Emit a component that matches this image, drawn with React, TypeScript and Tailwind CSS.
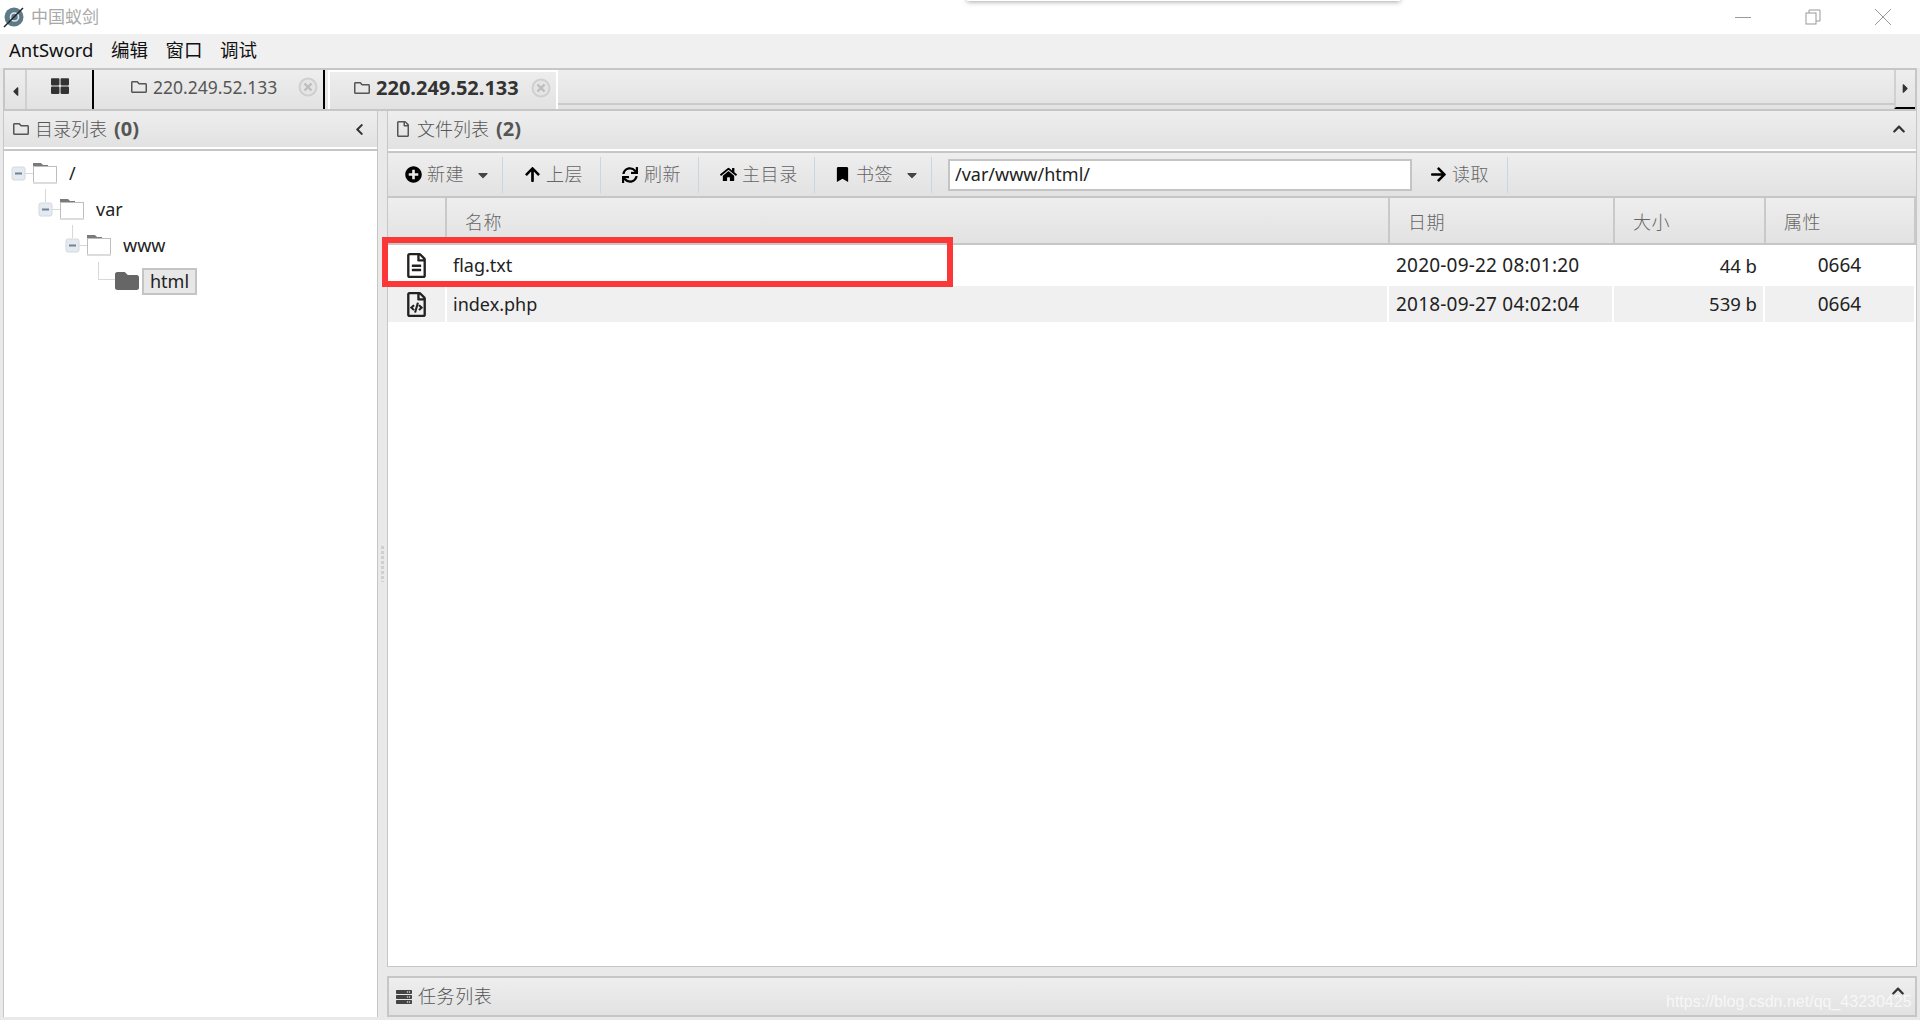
import type { ReactNode } from "react"
import {
  FaArrowRight,
  FaArrowUp,
  FaBookmark,
  FaCaretDown,
  FaCaretLeft,
  FaCaretRight,
  FaChevronLeft,
  FaChevronUp,
  FaFolder,
  FaHome,
  FaPlusCircle,
  FaRegFile,
  FaRegFileAlt,
  FaRegFileCode,
  FaRegFolder,
  FaServer,
  FaSync,
  FaThLarge,
} from "react-icons/fa"

const FONT = "font-['Noto_Sans','Noto_Sans_CJK_SC',sans-serif]"
const BAR = "bg-linear-to-b from-[#eeeeee] to-[#e2e2e2]"

function Logo() {
  return (
    <svg width="22" height="22" viewBox="0 0 22 22" className="ml-[3px]">
      <circle cx="11" cy="11" r="9.5" fill="#5d7a88" />
      <circle cx="11.5" cy="11" r="4" fill="none" stroke="#dfe6ea" strokeWidth="1.6" />
      <path d="M1 21 L20 2" stroke="#222" strokeWidth="1.4" />
    </svg>
  )
}

function CloseDot() {
  return (
    <svg width="20" height="20" viewBox="0 0 20 20" className="shrink-0">
      <circle cx="10" cy="10" r="8.5" fill="#e4e4e4" stroke="#cfcfcf" strokeWidth="2" />
      <path d="M6.5 6.5 L13.5 13.5 M13.5 6.5 L6.5 13.5" stroke="#bdbdbd" strokeWidth="2.4" />
    </svg>
  )
}

function Toggle() {
  return (
    <svg width="26" height="36" viewBox="0 0 26 36" className="shrink-0">
      <rect x="5" y="12" width="13" height="13" rx="2" fill="#e4eaef" stroke="#d3d9de" />
      <path d="M8 18.5 H15" stroke="#6f8596" strokeWidth="2" />
      <path d="M18 18.5 H26" stroke="#d8d8d8" />
    </svg>
  )
}

// tree folder: dark tab on top, pale outlined body
function TreeFolder() {
  return (
    <svg width="24" height="22" viewBox="0 0 24 22" className="shrink-0">
      <path d="M0 5 V1 H8 L10 3 H15 V5 Z" fill="#7a7a7a" />
      <rect x="0.5" y="4.5" width="23" height="16" fill="#fff" stroke="#bdbdbd" />
      <path d="M0 21 H24" stroke="#dcdcdc" strokeWidth="2" />
    </svg>
  )
}

function TreeRow({ depth, label }: { depth: number; label: string }) {
  return (
    <div className="relative flex h-9 items-center" style={{ paddingLeft: depth * 27 + 3 }}>
      {depth > 0 && <span className="absolute top-[-2px] h-[13px] w-px bg-[#d8d8d8]" style={{ left: depth * 27 + 14 }} />}
      <Toggle />
      <TreeFolder />
      <span className="ml-[12px] text-[18px] text-[#222]">{label}</span>
    </div>
  )
}

function ToolItem({ width, icon, label, caret, inset = "ml-[20px]" }: { width: string; icon: ReactNode; label: string; caret?: boolean; inset?: string }) {
  return (
    <div className={`flex h-[36px] items-center border-r border-[#c9d6dd] ${width}`}>
      <span className={`${inset} flex w-[18px] justify-center text-[17px] text-black`}>{icon}</span>
      <span className="ml-[5px] text-[18px] font-light tracking-[0.6px] text-[#666]">{label}</span>
      {caret && <FaCaretDown className="ml-[11px] text-[16px] text-[#444]" />}
    </div>
  )
}

function HeaderCell({ width, label, grow }: { width?: string; label: string; grow?: boolean }) {
  return (
    <div className={`flex items-center border-r-2 border-[#c9c9c9] pl-[18px] pt-[3px] text-[18px] font-light tracking-[0.4px] text-[#666] ${grow ? "flex-1" : width}`}>
      {label}
    </div>
  )
}

function FileRow({ icon, name, date, size, alt }: { icon: ReactNode; name: string; date: string; size: string; alt?: boolean }) {
  const cell = `flex h-full items-center ${alt ? "bg-[#f0f0f0]" : "bg-white"}`
  return (
    <div className={`flex gap-[2px] pr-[2px] text-[18px] text-[#222] ${alt ? "h-[36px]" : "h-[41px]"}`}>
      <div className={`${cell} w-[57px] justify-center text-[25px] text-[#222]`}>{icon}</div>
      <div className={`${cell} flex-1 pl-[6px]`}>{name}</div>
      <div className={`${cell} w-[223px] pl-[7px] text-[19px] tracking-[0.2px]`}>{date}</div>
      <div className={`${cell} w-[149px] justify-end pr-[6px] text-[18.5px]`}>{size}</div>
      <div className={`${cell} w-[149px] justify-center text-[19px]`}>0664</div>
    </div>
  )
}

export default function App() {
  return (
    <div className={`relative flex h-[1020px] w-[1920px] flex-col overflow-hidden bg-white ${FONT}`}>
      {/* title bar */}
      <div className="flex h-[34px] items-center bg-white">
        <Logo />
        <span className="ml-[6px] text-[17px] text-[#a8a8a8]">中国蚁剑</span>
        <div className="ml-auto flex items-center gap-[54px] pr-[29px] text-[#8c8c8c]">
          <span className="h-px w-[16px] bg-[#999]" />
          <svg width="16" height="18" viewBox="0 0 16 18" fill="none" stroke="#999">
            <rect x="1" y="5" width="10" height="11" fill="#fff" />
            <path d="M4 5 V2 H15 V13 H11" />
          </svg>
          <svg width="16" height="16" viewBox="0 0 16 16" stroke="#999">
            <path d="M0 0 L16 16 M16 0 L0 16" />
          </svg>
        </div>
      </div>

      {/* menu */}
      <div className="flex h-[34px] items-center gap-[17.5px] bg-[#f0f0f0] pb-[2px] pl-[9px] text-[18.5px] text-[#111]">
        <span>AntSword</span>
        <span>编辑</span>
        <span>窗口</span>
        <span>调试</span>
      </div>

      <div className="flex flex-1 flex-col bg-[#e9e9e9] px-[3px] pb-[3px]">
        {/* tabs */}
        <div className={`flex h-[43px] border-2 border-[#c6c6c6] ${BAR}`}>
          <div className="flex w-[22px] items-center justify-center border-r-2 border-[#d0d0d0] pt-[3px] text-[15px] text-[#333]">
            <FaCaretLeft />
          </div>
          <div className="flex w-[67px] items-center justify-center border-r-2 border-black pb-[7px] text-[18px] text-[#333]">
            <FaThLarge />
          </div>
          <div className="ml-[2px] flex w-[229px] items-center border-r-2 border-black pb-[5px] pl-[35px] text-[17.5px] text-[#555]">
            <FaRegFolder className="mr-[6px] shrink-0 text-[16px]" />
            <span className="mr-[21px]">220.249.52.133</span>
            <CloseDot />
          </div>
          <div className="ml-[3px] flex w-[230px] items-center border-x-2 border-t-2 border-white pb-[5px] pl-[24px] text-[20px] font-bold text-[#333]">
            <FaRegFolder className="mr-[6px] shrink-0 text-[16px] text-[#555]" />
            <span className="mr-[12px]">220.249.52.133</span>
            <CloseDot />
          </div>
          <div className="mb-[4px] flex-1 border-b-2 border-[#cacaca]" />
          <div className="flex w-[21px] items-center justify-center border-l-2 border-[#d0d0d0] border-b-2 border-b-black text-[15px] text-[#333]">
            <FaCaretRight />
          </div>
        </div>

        <div className="flex min-h-0 flex-1">
          {/* directory panel */}
          <div className="flex w-[375px] flex-col border-x border-[#c6c6c6]">
            <div className={`flex h-[38px] items-center border-b-2 border-white ${BAR} pl-[9px] pr-[11px] text-[18px] text-[#555]`}>
              <FaRegFolder className="mr-[6px] text-[16px]" />
              <span className="font-light">目录列表</span>
              <span className="ml-[7px] text-[20px] font-bold">(0)</span>
              <FaChevronLeft className="ml-auto text-[13px] text-[#333]" />
            </div>
            <div className="flex-1 border-t-2 border-[#c6c6c6] bg-white pt-[4px]">
              <TreeRow depth={0} label="/" />
              <TreeRow depth={1} label="var" />
              <TreeRow depth={2} label="www" />
              <div className="relative flex h-9 items-center pl-[111px]">
                <span className="absolute left-[94px] top-[-1px] h-[18px] w-[17px] border-b border-l border-[#d8d8d8]" />
                <FaFolder className="h-[24px] w-[24px] text-[#666]" />
                <span className="ml-[3px] border-2 border-[#c4c4c4] bg-[#e7e7e7] px-[6px] text-[18px] leading-[23px] text-[#222]">html</span>
              </div>
            </div>
          </div>

          {/* splitter */}
          <div className="flex w-[9px] items-center justify-center">
            <span className="h-[36px] w-[3px] bg-[repeating-linear-gradient(to_bottom,#cfcfcf_0,#cfcfcf_3px,transparent_3px,transparent_5px)]" />
          </div>

          {/* right side */}
          <div className="flex min-w-0 flex-1 flex-col">
            <div className="flex flex-1 flex-col border-x border-b border-[#c6c6c6] bg-white">
              <div className={`flex h-[40px] items-center border-b-2 border-white ${BAR} pb-[2px] pl-[7px] pr-[10px] text-[18px] text-[#555]`}>
                <FaRegFile className="mr-[6px] text-[16px]" />
                <span className="font-light">文件列表</span>
                <span className="ml-[7px] text-[20px] font-bold">(2)</span>
                <FaChevronUp className="ml-auto text-[14px] text-[#333]" />
              </div>
              <div className={`flex h-[47px] items-center border-y-2 border-[#c6c6c6] ${BAR}`}>
                <ToolItem width="w-[115px]" inset="ml-[16px]" icon={<FaPlusCircle />} label="新建" caret />
                <ToolItem width="w-[98px]" icon={<FaArrowUp />} label="上层" />
                <ToolItem width="w-[98px]" icon={<FaSync className="text-[16px]" />} label="刷新" />
                <ToolItem width="w-[116px]" icon={<FaHome />} label="主目录" />
                <ToolItem width="w-[117px]" inset="ml-[18px]" icon={<FaBookmark className="text-[15px]" />} label="书签" caret />
                <div className="ml-[16px] flex h-[32px] w-[464px] items-center border-2 border-[#c4c4c4] bg-white pl-[5px] text-[18px] text-[#222]">/var/www/html/</div>
                <ToolItem width="w-[96px]" inset="ml-[17px]" icon={<FaArrowRight />} label="读取" />
              </div>
              <div className={`flex h-[47px] border-b-2 border-[#c6c6c6] ${BAR}`}>
                <div className="w-[59px] border-r-2 border-[#c9c9c9]" />
                <HeaderCell grow label="名称" />
                <HeaderCell width="w-[225px]" label="日期" />
                <HeaderCell width="w-[151px]" label="大小" />
                <HeaderCell width="w-[150px]" label="属性" />
              </div>
              <FileRow icon={<FaRegFileAlt />} name="flag.txt" date="2020-09-22 08:01:20" size="44 b" />
              <FileRow alt icon={<FaRegFileCode />} name="index.php" date="2018-09-27 04:02:04" size="539 b" />
            </div>

            {/* task panel */}
            <div className={`mt-[9px] flex h-[41px] items-center border-2 border-[#c6c6c6] ${BAR} pl-[7px] pr-[10px] text-[18px] text-[#555]`}>
              <FaServer className="mr-[6px] text-[16px] text-[#444]" />
              <span className="font-light tracking-[0.6px]">任务列表</span>
              <FaChevronUp className="mb-3 ml-auto text-[14px] text-[#333]" />
            </div>
          </div>
        </div>
      </div>

      {/* popup shadow at the top edge */}
      <div className="absolute left-[967px] top-[-6px] h-[7px] w-[433px] bg-white shadow-[0_1px_5px_rgba(0,0,0,0.35)]" />

      {/* annotation */}
      <div className="absolute left-[382px] top-[237px] h-[50px] w-[571px] border-[6px] border-[#fb3737]" />

      {/* watermark */}
      <span className="absolute left-[1666px] top-[990px] font-['Liberation_Sans',sans-serif] text-[16px] text-white/70">https://blog.csdn.net/qq_43230425</span>
    </div>
  )
}
